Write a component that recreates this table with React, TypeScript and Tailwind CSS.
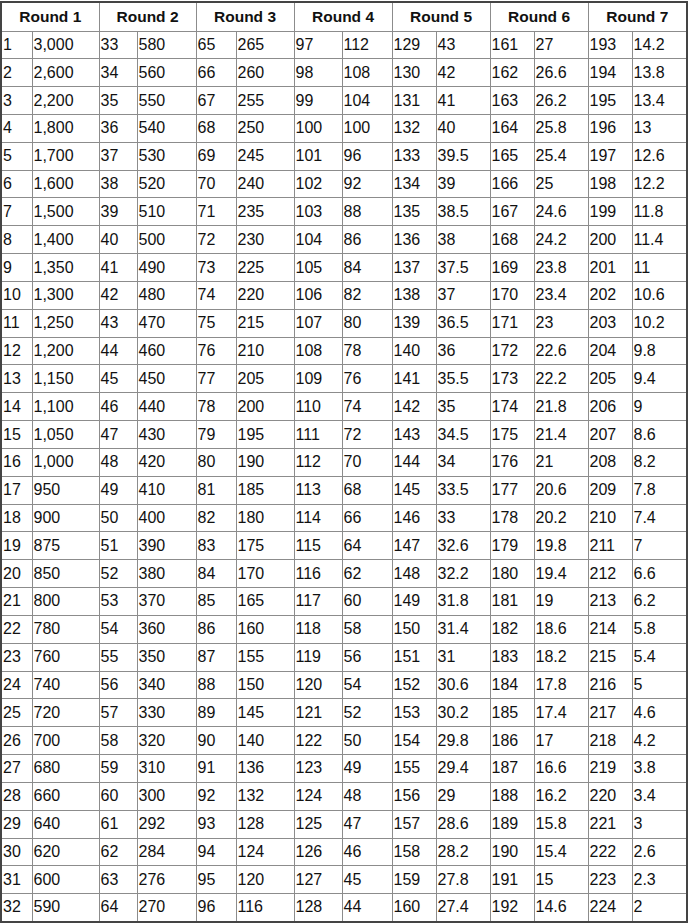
import { Fragment } from 'react';

const values: string[][] = [
  ['3,000', '2,600', '2,200', '1,800', '1,700', '1,600', '1,500', '1,400', '1,350', '1,300', '1,250', '1,200', '1,150', '1,100', '1,050', '1,000', '950', '900', '875', '850', '800', '780', '760', '740', '720', '700', '680', '660', '640', '620', '600', '590'],
  ['580', '560', '550', '540', '530', '520', '510', '500', '490', '480', '470', '460', '450', '440', '430', '420', '410', '400', '390', '380', '370', '360', '350', '340', '330', '320', '310', '300', '292', '284', '276', '270'],
  ['265', '260', '255', '250', '245', '240', '235', '230', '225', '220', '215', '210', '205', '200', '195', '190', '185', '180', '175', '170', '165', '160', '155', '150', '145', '140', '136', '132', '128', '124', '120', '116'],
  ['112', '108', '104', '100', '96', '92', '88', '86', '84', '82', '80', '78', '76', '74', '72', '70', '68', '66', '64', '62', '60', '58', '56', '54', '52', '50', '49', '48', '47', '46', '45', '44'],
  ['43', '42', '41', '40', '39.5', '39', '38.5', '38', '37.5', '37', '36.5', '36', '35.5', '35', '34.5', '34', '33.5', '33', '32.6', '32.2', '31.8', '31.4', '31', '30.6', '30.2', '29.8', '29.4', '29', '28.6', '28.2', '27.8', '27.4'],
  ['27', '26.6', '26.2', '25.8', '25.4', '25', '24.6', '24.2', '23.8', '23.4', '23', '22.6', '22.2', '21.8', '21.4', '21', '20.6', '20.2', '19.8', '19.4', '19', '18.6', '18.2', '17.8', '17.4', '17', '16.6', '16.2', '15.8', '15.4', '15', '14.6'],
  ['14.2', '13.8', '13.4', '13', '12.6', '12.2', '11.8', '11.4', '11', '10.6', '10.2', '9.8', '9.4', '9', '8.6', '8.2', '7.8', '7.4', '7', '6.6', '6.2', '5.8', '5.4', '5', '4.6', '4.2', '3.8', '3.4', '3', '2.6', '2.3', '2'],
];

// pick / value column widths, per round
const widths = [31, 67, 38, 59, 40, 58, 48, 50, 44, 54, 44, 54, 44, 55];

const cell = 'h-[27.84px] border border-[#8c8c8c] px-[1px] py-0 leading-none whitespace-nowrap';

export default function App() {
  return (
    <div className="bg-white w-[690px] h-[924px] pt-px font-['Liberation_Sans',Arial,sans-serif] text-[16px] text-[#111]">
      <table className="table-fixed border-collapse border-2 border-[#444] w-[687px]">
        <colgroup>
          {widths.map((w, i) => (
            <col key={i} style={{ width: w }} />
          ))}
        </colgroup>
        <thead>
          <tr>
            {values.map((_, r) => (
              <th
                key={r}
                colSpan={2}
                className="h-[29px] border border-[#8c8c8c] text-center font-bold text-[15.5px] leading-none p-0"
              >
                Round {r + 1}
              </th>
            ))}
          </tr>
        </thead>
        <tbody>
          {values[0].map((_, i) => (
            <tr key={i}>
              {values.map((col, r) => (
                <Fragment key={r}>
                  <td className={cell}>{r * 32 + i + 1}</td>
                  <td className={cell}>{col[i]}</td>
                </Fragment>
              ))}
            </tr>
          ))}
        </tbody>
      </table>
    </div>
  );
}
